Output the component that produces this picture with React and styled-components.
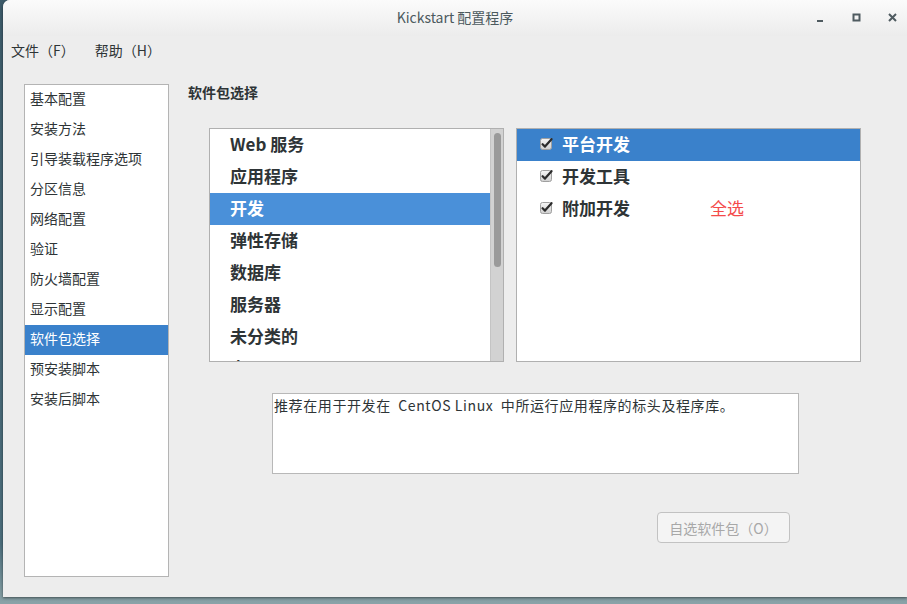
import React from 'react'
import styled, { createGlobalStyle } from 'styled-components'

const GlobalStyle = createGlobalStyle`
  html, body {
    margin: 0;
    padding: 0;
    width: 907px;
    height: 604px;
    overflow: hidden;
    background: linear-gradient(180deg, #3d5b6a 0%, #4d6f7d 90%, #8aa3a8 100%);
    font-family: "Noto Sans CJK SC", "Noto Sans", sans-serif;
  }
`

const sections = ['基本配置', '安装方法', '引导装载程序选项', '分区信息', '网络配置', '验证', '防火墙配置', '显示配置', '软件包选择', '预安装脚本', '安装后脚本']
const categories = ['Web 服务', '应用程序', '开发', '弹性存储', '数据库', '服务器', '未分类的', '桌面']
const groups = ['平台开发', '开发工具', '附加开发']

const Window = styled.div`
  margin-left: 3px;
  width: 904px;
  height: 597px;
  background: #ededed;
  border-top-left-radius: 7px;
  box-shadow: 0 1px 3px rgba(0, 0, 0, 0.5);
  display: flex;
  flex-direction: column;
  overflow: hidden;
`

const TitleBar = styled.div`
  height: 36px;
  flex: none;
  box-sizing: border-box;
  padding-bottom: 3px;
  position: relative;
  display: flex;
  align-items: center;
  justify-content: center;
  background: linear-gradient(180deg, #fbfbfb 0%, #ececec 100%);
  color: #4c5a5e;
  font-size: 14px;
`

const Controls = styled.div`
  position: absolute;
  right: 9px;
  top: 12px;
  display: flex;
  gap: 25px;
`

const MenuBar = styled.div`
  height: 28px;
  display: flex;
  align-items: center;
  gap: 20px;
  padding-left: 8px;
  font-size: 14px;
  color: #2e3436;
`

const Body = styled.div`
  display: flex;
  padding: 20px 0 0 21px;
`

const Sidebar = styled.div`
  width: 143px;
  height: 491px;
  background: #fff;
  border: 1px solid #b4b4b4;
  flex: none;
`

const SideItem = styled.div`
  height: 30px;
  line-height: 27px;
  padding-left: 5px;
  font-size: 14px;
  color: ${p => (p.$active ? '#fff' : '#2e3436')};
  background: ${p => (p.$active ? '#3a81cb' : 'transparent')};
`

const Main = styled.div`
  margin-left: 19px;
  width: 680px;
  display: flex;
  flex-direction: column;
`

const Heading = styled.div`
  font-size: 14px;
  font-weight: bold;
  color: #2e3436;
  line-height: 16px;
`

const Panes = styled.div`
  display: flex;
  gap: 12px;
  margin: 28px 0 0 21px;
`

const Pane = styled.div`
  width: ${p => p.$w}px;
  height: 232px;
  background: #fff;
  border: 1px solid #b0b0b0;
  display: flex;
  overflow: hidden;
`

const Rows = styled.div`
  flex: 1;
`

const Row = styled.div`
  height: 32px;
  box-sizing: border-box;
  padding-bottom: 3px;
  display: flex;
  align-items: center;
  gap: 9px;
  padding-left: ${p => p.$pad}px;
  font-size: 17px;
  font-weight: bold;
  color: ${p => (p.$active ? '#fff' : '#2e3436')};
  background: ${p => (p.$active ? p.$sel : 'transparent')};
`

const Trough = styled.div`
  width: 13px;
  background: #d2d2d2;
  border-left: 1px solid #c4c4c4;
  padding: 4px 0 0 3px;
  box-sizing: border-box;
`

const Thumb = styled.div`
  width: 7px;
  height: 134px;
  border-radius: 4px;
  background: #9a9a9a;
`

const SelectAll = styled.span`
  margin-left: 71px;
  color: #f44a4a;
  font-weight: normal;
  font-size: 17px;
`

const Description = styled.div`
  margin: 31px 0 0 84px;
  width: 527px;
  height: 81px;
  background: #fff;
  border: 1px solid #b8b8b8;
  font-size: 14px;
  letter-spacing: 0.6px;
  color: #2e3436;
  padding: 1px 0 0 1px;
  box-sizing: border-box;
  line-height: 20px;
  white-space: pre;
`

const ButtonRow = styled.div`
  display: flex;
  padding-left: 469px;
  margin-top: 38px;
`

const Button = styled.div`
  width: 131px;
  height: 29px;
  border: 1px solid #c2c2c2;
  border-radius: 4px;
  background: #f4f4f4;
  color: #a8a8a8;
  font-size: 14px;
  display: flex;
  align-items: center;
  justify-content: center;
`

const CheckBox = () => (
  <svg width="13" height="13" viewBox="0 0 13 13">
    <defs>
      <linearGradient id="cb" x1="0" y1="0" x2="0" y2="1">
        <stop offset="0" stopColor="#f6f6f6" />
        <stop offset="1" stopColor="#cfcfcf" />
      </linearGradient>
    </defs>
    <rect x="0.5" y="1.5" width="11" height="11" rx="2" fill="url(#cb)" stroke="#a0a0a0" />
    <path d="M2.6 7.2 L5 9.6 L11.5 2.2" fill="none" stroke="#2b2b2b" strokeWidth="2.2" strokeLinecap="round" strokeLinejoin="round" />
  </svg>
)

const WindowControls = () => (
  <Controls>
    <svg width="11" height="11" viewBox="0 0 11 11">
      <rect x="2" y="8" width="6" height="2" fill="#4f5b60" />
    </svg>
    <svg width="11" height="11" viewBox="0 0 11 11">
      <rect x="2.5" y="2.5" width="6" height="6" fill="none" stroke="#4f5b60" strokeWidth="2" />
    </svg>
    <svg width="11" height="11" viewBox="0 0 11 11">
      <path d="M2 2 L9 9 M9 2 L2 9" stroke="#4f5b60" strokeWidth="2" />
    </svg>
  </Controls>
)

const App = () => {
  return (
    <>
      <GlobalStyle />
      <Window>
        <TitleBar>
          Kickstart 配置程序
          <WindowControls />
        </TitleBar>
        <MenuBar>
          <span>文件（F）</span>
          <span>帮助（H）</span>
        </MenuBar>
        <Body>
          <Sidebar>
            {sections.map(s => (
              <SideItem key={s} $active={s === '软件包选择'}>{s}</SideItem>
            ))}
          </Sidebar>
          <Main>
            <Heading>软件包选择</Heading>
            <Panes>
              <Pane $w={293}>
                <Rows>
                  {categories.map(c => (
                    <Row key={c} $pad={20} $active={c === '开发'} $sel="#4a90d9">{c}</Row>
                  ))}
                </Rows>
                <Trough>
                  <Thumb />
                </Trough>
              </Pane>
              <Pane $w={343}>
                <Rows>
                  {groups.map((g, i) => (
                    <Row key={g} $pad={23} $active={i === 0} $sel="#3a81cb">
                      <CheckBox />
                      {g}
                      {i === 2 && <SelectAll>全选</SelectAll>}
                    </Row>
                  ))}
                </Rows>
              </Pane>
            </Panes>
            <Description>{'推荐在用于开发在  CentOS Linux  中所运行应用程序的标头及程序库。'}</Description>
            <ButtonRow>
              <Button>自选软件包（O）</Button>
            </ButtonRow>
          </Main>
        </Body>
      </Window>
    </>
  )
}

export default App
